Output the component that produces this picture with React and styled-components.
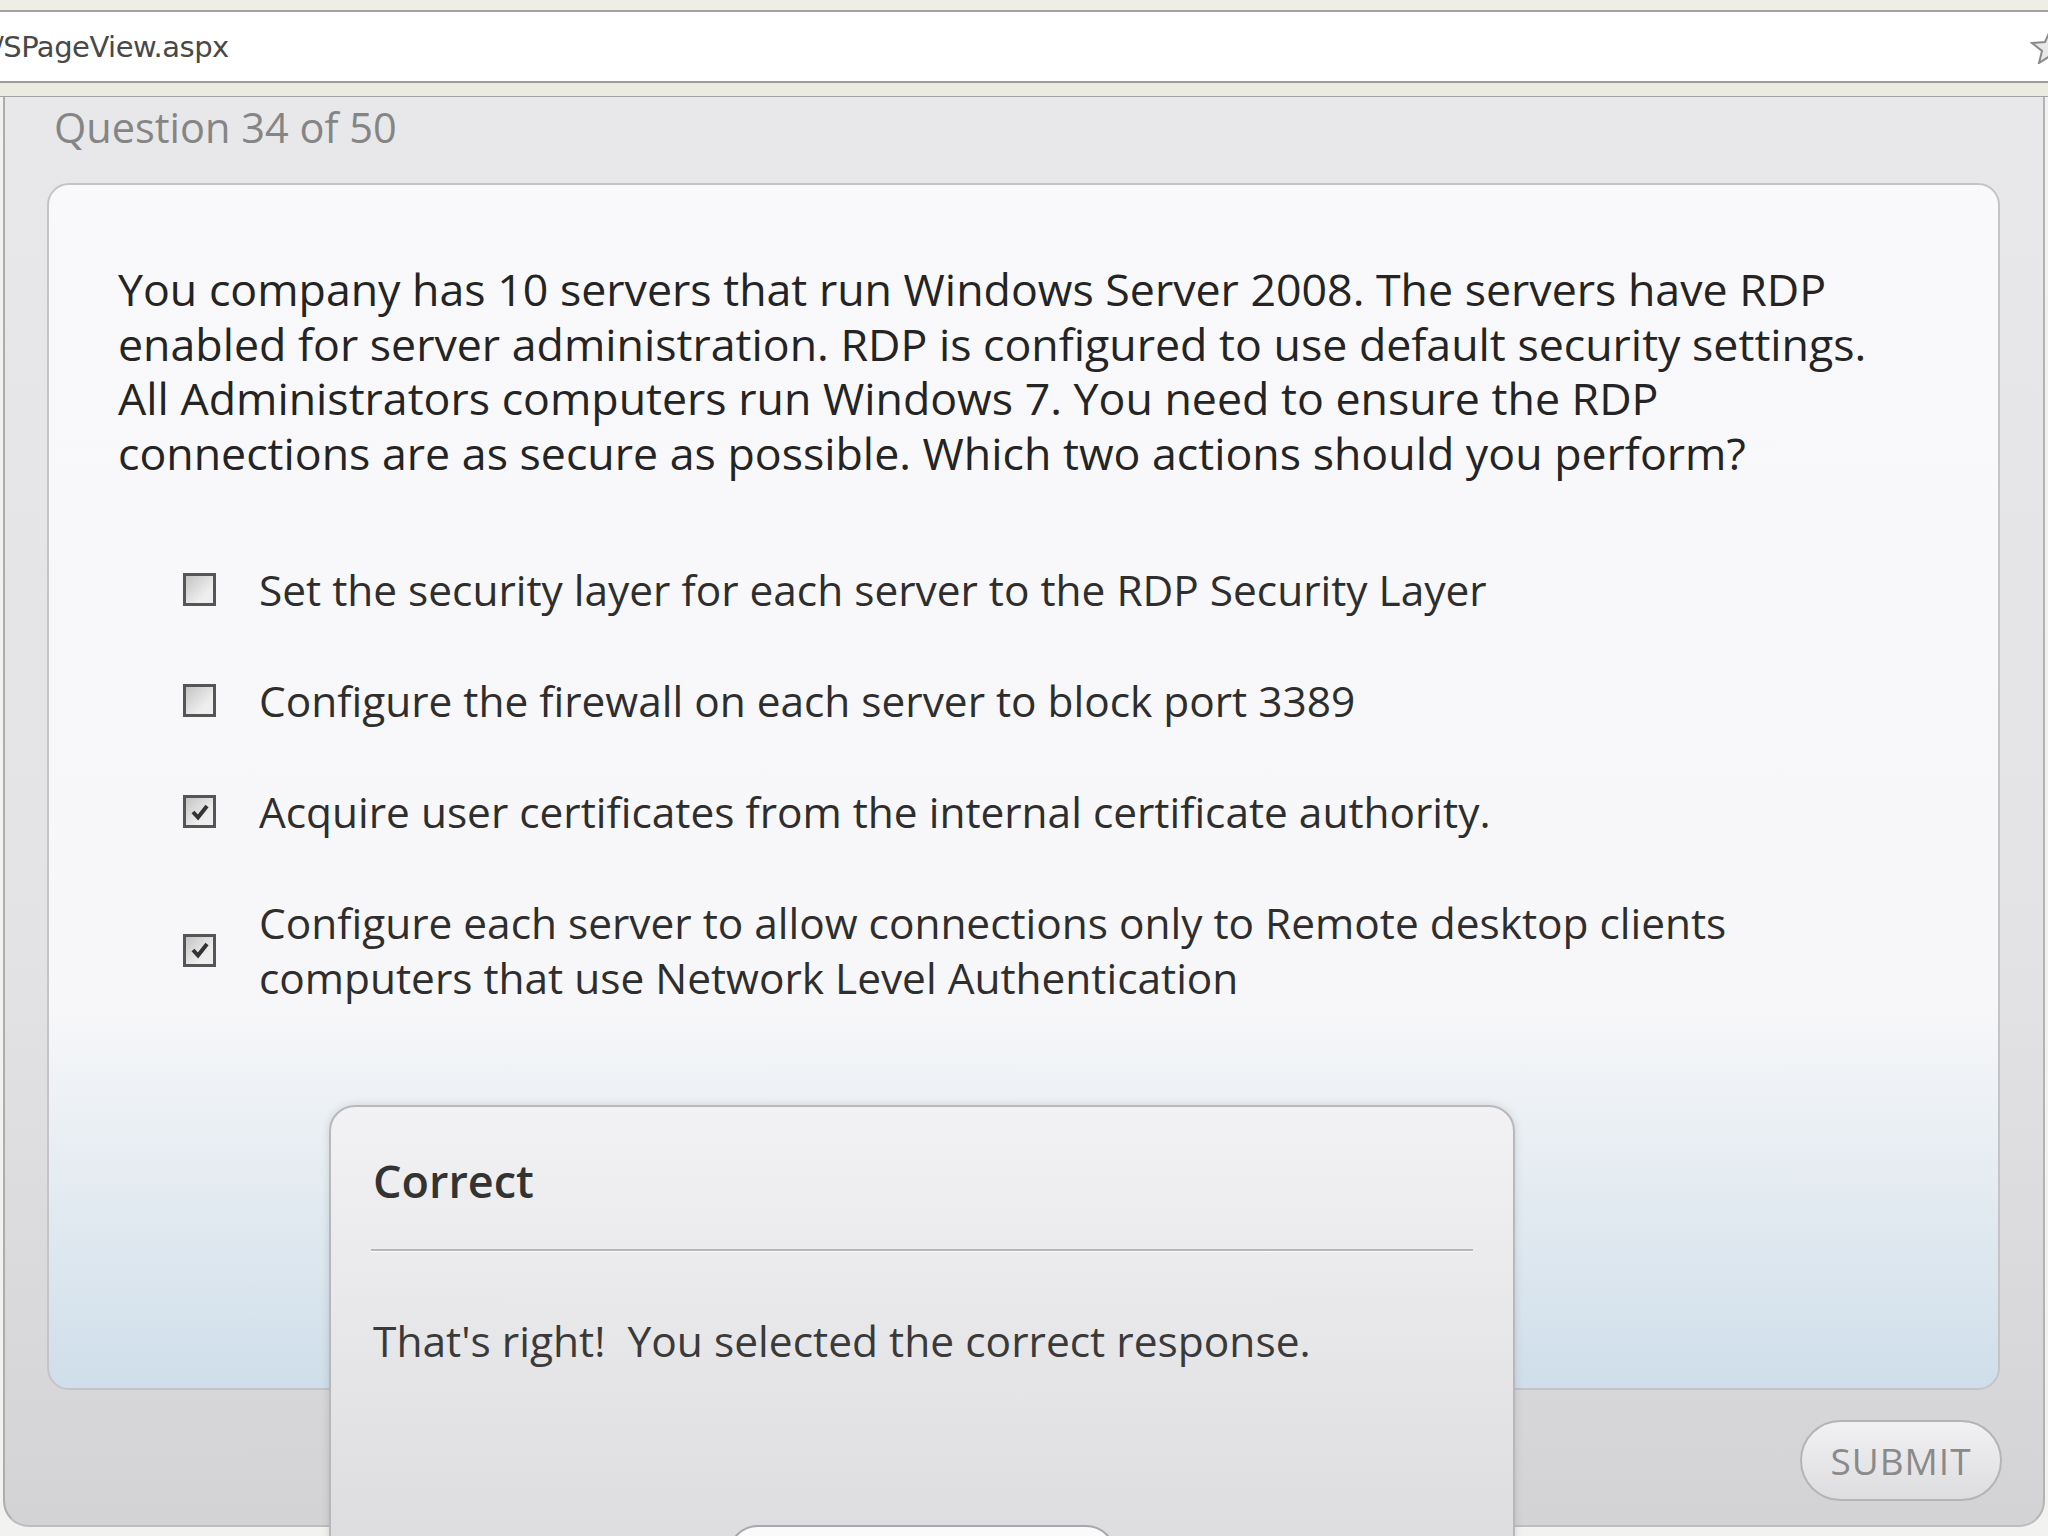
import React from 'react';
import styled, { createGlobalStyle } from 'styled-components';

const GlobalStyle = createGlobalStyle`
  *, *::before, *::after { box-sizing: border-box; }
  html, body { margin: 0; padding: 0; }
  body {
    width: 2048px;
    height: 1536px;
    overflow: hidden;
    background: #f2f2f0;
    font-family: "Open Sans", "Noto Sans", sans-serif;
  }
`;

const Page = styled.div`
  position: relative;
  width: 2048px;
  height: 1536px;
  display: flex;
  flex-direction: column;
  overflow: hidden;
`;

// browser chrome
const TopStrip = styled.div`
  height: 12px;
  background: #efeee6;
  border-bottom: 2px solid #a2a29e;
`;

const AddressBar = styled.div`
  height: 71px;
  background: #fff;
  border-bottom: 2px solid #9c9c98;
  display: flex;
  align-items: center;
  justify-content: space-between;
  overflow: hidden;
`;

const Url = styled.span`
  margin-left: -6px;
  font-family: "DejaVu Sans", "Liberation Sans", sans-serif;
  font-size: 29px;
  color: #484848;
  letter-spacing: -0.5px;
`;

const MenuStrip = styled.div`
  height: 14px;
  background: #ecebe1;
  border-bottom: 1px solid #a3a3a3;
`;

// quiz panel
const Panel = styled.div`
  flex: none;
  height: 1430px;
  width: 2042px;
  margin-left: 3px;
  border-left: 2px solid #adadad;
  border-right: 2px solid #b3b3b3;
  border-bottom: 2px solid #bdbdbd;
  border-radius: 0 0 26px 26px;
  background: linear-gradient(#e8e8ea, #e3e3e5 60%, #d3d3d5);
  padding: 0 43px 0 42px;
  display: flex;
  flex-direction: column;
`;

const Header = styled.div`
  height: 86px;
  padding: 3px 0 0 7px;
  font-size: 41.5px;
  line-height: 54px;
  color: #858585;
`;

const Card = styled.div`
  height: 1207px;
  border: 2px solid #c4c4c8;
  border-radius: 22px;
  background: linear-gradient(#f9f9fb 0%, #f7f7f9 68%, #e8eef3 80%, #cfdeea 100%);
  padding: 77px 40px 0 69px;
`;

const Question = styled.p`
  margin: 0;
  font-size: 44.7px;
  line-height: 54.5px;
  color: #242424;
  white-space: nowrap;
`;

const OptionList = styled.div`
  margin-top: 82px;
  padding-left: 65px;
  display: flex;
  flex-direction: column;
  gap: 56px;
`;

const Option = styled.label`
  display: flex;
  align-items: center;
  gap: 43px;
`;

const Box = styled.span`
  flex: none;
  width: 33px;
  height: 33px;
  border: 3px solid #555;
  background: linear-gradient(135deg, #c4c4c4, #eeeeee 70%);
  display: flex;
  align-items: center;
  justify-content: center;
`;

const OptionText = styled.span`
  font-size: 42.4px;
  line-height: 55px;
  color: #2e2e2e;
  white-space: nowrap;
`;

const ButtonRow = styled.div`
  margin-top: 30px;
  display: flex;
  justify-content: flex-end;
  margin-right: -2px;
`;

const SubmitButton = styled.button`
  width: 202px;
  height: 81px;
  border-radius: 41px;
  border: 2px solid #b4b4b6;
  background: linear-gradient(#f1f1f3, #dddddf);
  font-family: "Open Sans", sans-serif;
  font-size: 37px;
  color: #8a8a8a;
  letter-spacing: 1px;
  padding: 0;
`;

// feedback dialog over the card
const Popup = styled.div`
  position: absolute;
  left: 329px;
  top: 1105px;
  width: 1186px;
  height: 520px;
  border: 2px solid #b8b8ba;
  border-radius: 26px;
  background: linear-gradient(#f2f2f4, #e3e3e5 60%, #d9d9db);
  box-shadow: 0 0 8px rgba(0, 0, 0, 0.12);
  padding: 0 40px;
  display: flex;
  flex-direction: column;
`;

const PopupTitle = styled.div`
  padding: 46px 0 0 2px;
  font-size: 45px;
  font-weight: 600;
  line-height: 56px;
  color: #333;
`;

const Divider = styled.div`
  margin-top: 40px;
  border-top: 2px solid #b6b6b8;
  border-bottom: 1px solid #fbfbfb;
`;

const Message = styled.div`
  margin-top: 62px;
  padding-left: 2px;
  font-size: 42.5px;
  line-height: 54px;
  color: #3a3a3a;
  white-space: pre;
`;

const CloseButton = styled.div`
  margin-top: 157px;
  align-self: center;
  width: 388px;
  height: 60px;
  border-radius: 30px;
  border: 2px solid #a8a8aa;
  background: #fafafa;
`;

const Check = () => (
  <svg width="20" height="18" viewBox="0 0 20 18">
    <path d="M3 9 L8 14.5 L17 3" fill="none" stroke="#333" strokeWidth="4" />
  </svg>
);

const Star = () => (
  <svg width="40" height="34" viewBox="0 0 40 34" style={{ marginRight: -22 }}>
    <path d="M20 1 L25 12 L38 13 L28 21 L31 33 L20 26 L9 33 L12 21 L2 13 L15 12 Z" fill="#e8e8e8" stroke="#8a8a8a" strokeWidth="2" />
  </svg>
);

const options = [
  { text: 'Set the security layer for each server to the RDP Security Layer', checked: false },
  { text: 'Configure the firewall on each server to block port 3389', checked: false },
  { text: 'Acquire user certificates from the internal certificate authority.', checked: true },
  {
    text: (
      <>
        Configure each server to allow connections only to Remote desktop clients
        <br />
        computers that use Network Level Authentication
      </>
    ),
    checked: true,
  },
];

export default function App() {
  return (
    <>
      <GlobalStyle />
      <Page>
        <TopStrip />
        <AddressBar>
          <Url>/SPageView.aspx</Url>
          <Star />
        </AddressBar>
        <MenuStrip />

        <Panel>
          <Header>Question 34 of 50</Header>
          <Card>
            <Question>
              You company has 10 servers that run Windows Server 2008. The servers have RDP
              <br />
              enabled for server administration. RDP is configured to use default security settings.
              <br />
              All Administrators computers run Windows 7. You need to ensure the RDP
              <br />
              connections are as secure as possible. Which two actions should you perform?
            </Question>
            <OptionList>
              {options.map((o, i) => (
                <Option key={i}>
                  <Box>{o.checked && <Check />}</Box>
                  <OptionText>{o.text}</OptionText>
                </Option>
              ))}
            </OptionList>
          </Card>
          <ButtonRow>
            <SubmitButton>SUBMIT</SubmitButton>
          </ButtonRow>
        </Panel>

        <Popup>
          <PopupTitle>Correct</PopupTitle>
          <Divider />
          <Message>That's right!  You selected the correct response.</Message>
          <CloseButton />
        </Popup>
      </Page>
    </>
  );
}
